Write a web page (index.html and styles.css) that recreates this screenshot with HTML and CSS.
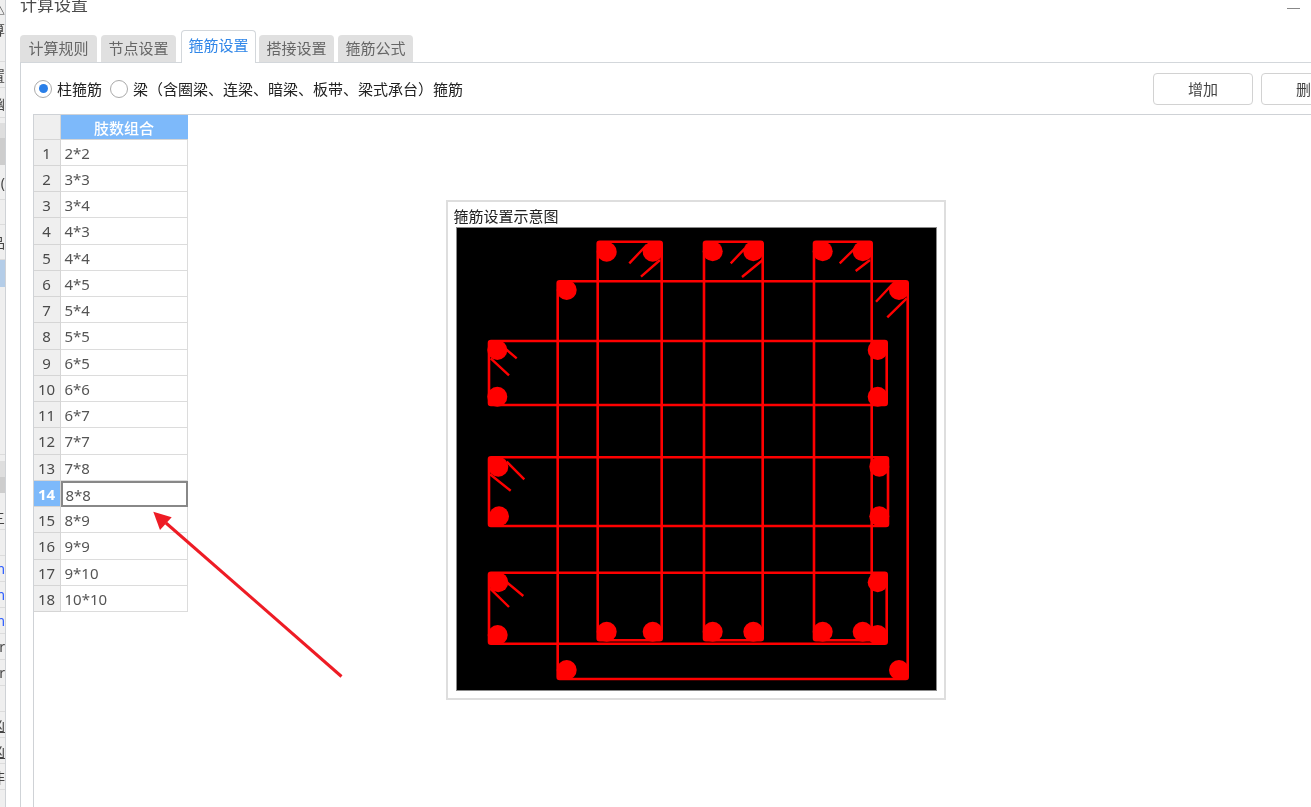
FILE: index.html
```html
<!DOCTYPE html>
<html lang="zh-CN">
<head>
<meta charset="utf-8">
<title>计算设置</title>
<link rel="stylesheet" href="styles.css">
</head>
<body>
<div class="page">
  <aside class="strip">
    <div class="sr h16"><span>△</span></div>
    <div class="sr h26"><span>算</span></div>
    <div class="sr h20 line"></div>
    <div class="sr h26 line"><span>置</span></div>
    <div class="sr h30 line"><span>幽</span></div>
    <div class="sr h5"></div>
    <div class="sr h15 gray"></div>
    <div class="sr h27 dark"></div>
    <div class="sr h35 line"><span>(</span></div>
    <div class="sr h25 line"></div>
    <div class="sr h35 line"><span>品</span></div>
    <div class="sr h27 sel"></div>
    <div class="sr h168 line"></div>
    <div class="sr h6"></div>
    <div class="sr h16 gray"></div>
    <div class="sr h16 dark"></div>
    <div class="sr h12"></div>
    <div class="sr h25 line"><span>三</span></div>
    <div class="sr h26 line"></div>
    <div class="sr h26 line blue"><span>m</span></div>
    <div class="sr h26 line blue"><span>m</span></div>
    <div class="sr h26 line blue"><span>m</span></div>
    <div class="sr h26 line"><span>r</span></div>
    <div class="sr h26 line"><span>r</span></div>
    <div class="sr h26 line"></div>
    <div class="sr h26 line"><span class="ul">凶</span></div>
    <div class="sr h26 line"><span class="ul">凶</span></div>
    <div class="sr h26 line"><span>非</span></div>
  </aside>

  <main class="dialog">
    <header class="titlebar">
      <h1 class="title">计算设置</h1>
      <span class="minimize"></span>
    </header>

    <nav class="tabs">
      <a class="tab first">计算规则</a>
      <a class="tab">节点设置</a>
      <a class="tab active">箍筋设置</a>
      <a class="tab">搭接设置</a>
      <a class="tab">箍筋公式</a>
    </nav>

    <section class="panel">
      <div class="toolbar">
        <div class="radios">
          <label class="radio"><i class="dot on"></i>柱箍筋</label>
          <label class="radio"><i class="dot"></i>梁（含圈梁、连梁、暗梁、板带、梁式承台）箍筋</label>
        </div>
        <div class="buttons">
          <button class="btn">增加</button>
          <button class="btn">删除</button>
        </div>
      </div>

      <div class="body">
        <div class="grid">
          <div class="corner"></div><div class="head">肢数组合</div>
          <div class="num">1</div><div class="cell">2*2</div>
          <div class="num">2</div><div class="cell">3*3</div>
          <div class="num">3</div><div class="cell">3*4</div>
          <div class="num">4</div><div class="cell">4*3</div>
          <div class="num">5</div><div class="cell">4*4</div>
          <div class="num">6</div><div class="cell">4*5</div>
          <div class="num">7</div><div class="cell">5*4</div>
          <div class="num">8</div><div class="cell">5*5</div>
          <div class="num">9</div><div class="cell">6*5</div>
          <div class="num">10</div><div class="cell">6*6</div>
          <div class="num">11</div><div class="cell">6*7</div>
          <div class="num">12</div><div class="cell">7*7</div>
          <div class="num">13</div><div class="cell">7*8</div>
          <div class="num cur">14</div><div class="cell cur">8*8</div>
          <div class="num">15</div><div class="cell">8*9</div>
          <div class="num">16</div><div class="cell">9*9</div>
          <div class="num">17</div><div class="cell">9*10</div>
          <div class="num">18</div><div class="cell">10*10</div>
        </div>

        <figure class="diagram">
          <figcaption class="caption">箍筋设置示意图</figcaption>
          <svg class="canvas" viewBox="456 227 481 464" width="481" height="464" aria-label="箍筋设置示意图">
            <g fill="none" stroke="#f00" stroke-width="2.6">
              <rect x="597.7" y="241.7" width="64" height="398.6" rx="2"/>
              <rect x="704" y="241.7" width="58.7" height="398.6" rx="2"/>
              <rect x="814" y="241.7" width="57.7" height="398.6" rx="2"/>
              <rect x="557.7" y="281.3" width="350" height="397.7" rx="2"/>
              <rect x="489" y="341" width="397.7" height="64" rx="2"/>
              <rect x="489" y="457.3" width="399" height="68.7" rx="2"/>
              <rect x="489" y="572.7" width="397.7" height="71" rx="2"/>
              <path stroke-width="2.4" d="M646.7 245L629.3 263.3M660 260L641 276.7M745 248.3L730.7 263.3M762.7 260L742 277M855 248.3L839.7 263.3M870 260L855.7 271M891.7 285L876 301.7M906.7 298.3L887.3 317.3M505.7 349L516.7 358.3M490.7 358.3L509 375.3M506.7 461.7L524.3 479.3M490 474.3L510.7 490.7M506.7 582.3L523.3 596M490 588.3L509 607"/>
            </g>
            <path fill="#f00" d="M597.7 241.7h9v10h-9zM652.7 241.7h9v10h-9zM704 241.7h9v10h-9zM753.3 241.7h9.4v10h-9.4zM814 241.7h9v10h-9zM862.7 241.7h9v10h-9zM597.7 631.7h9v8.5h-9zM652.7 631.7h9v8.5h-9zM704 631.7h9v8.5h-9zM753.3 631.7h9.4v8.5h-9.4zM814 631.7h9v8.5h-9zM862.7 631.7h9v8.5h-9zM557.7 281.3h9v9h-9zM899 281.3h8.7v9h-8.7zM557.7 670h9v9h-9zM899 670h8.7v9h-8.7zM489 341h8.3v9h-8.3zM489 396.7h8.3v8.3h-8.3zM877.7 341h9v9h-9zM877.7 396.7h9v8.3h-9zM489 457.3h9.3v9.4h-9.3zM489 516.3h10v9.7h-10zM879.3 457.3h8.7v9.4h-8.7zM879.3 516.3h8.7v9.7h-8.7zM489 572.7h9.3v9.6h-9.3zM489 635h8.7v8.7h-8.7zM877.7 572.7h9v9.6h-9zM877.7 635h9v8.7h-9z"/>
            <g fill="#f00">
              <circle cx="606.7" cy="251.7" r="10"/><circle cx="652.7" cy="251.7" r="10"/>
              <circle cx="712.7" cy="251.3" r="10"/><circle cx="753.3" cy="251.3" r="10"/>
              <circle cx="822.7" cy="251.3" r="10"/><circle cx="862.7" cy="251.3" r="10"/>
              <circle cx="566.7" cy="290" r="10"/><circle cx="899" cy="290" r="10"/>
              <circle cx="497.3" cy="350" r="10"/><circle cx="497.3" cy="396.7" r="10"/>
              <circle cx="877.7" cy="350" r="10"/><circle cx="877.7" cy="396.7" r="10"/>
              <circle cx="498.3" cy="466.7" r="10"/><circle cx="499" cy="516.3" r="10"/>
              <circle cx="879.3" cy="466.7" r="10"/><circle cx="879.3" cy="516.3" r="10"/>
              <circle cx="498.3" cy="582.3" r="10"/><circle cx="497.7" cy="635" r="10"/>
              <circle cx="877.7" cy="582.3" r="10"/><circle cx="877.7" cy="635" r="10"/>
              <circle cx="606.7" cy="631.7" r="10"/><circle cx="652.7" cy="631.7" r="10"/>
              <circle cx="712.7" cy="631.7" r="10"/><circle cx="753.3" cy="631.7" r="10"/>
              <circle cx="822.7" cy="631.7" r="10"/><circle cx="862.7" cy="631.7" r="10"/>
              <circle cx="566.7" cy="670" r="10"/><circle cx="899" cy="670" r="10"/>
            </g>
          </svg>
        </figure>
      </div>
    </section>
  </main>

  <svg class="arrow" viewBox="0 0 1311 807" width="1311" height="807" aria-hidden="true">
    <path d="M341.5 676.5L166 523" fill="none" stroke="#ee1c25" stroke-width="3"/>
    <path d="M153.3 511.7L171.7 517.3L160 530z" fill="#ee1c25"/>
  </svg>
</div>
</body>
</html>
```

FILE: styles.css
```css
* { box-sizing: border-box; }
html, body { margin: 0; height: 100%; overflow: hidden; background: #fff; }
body { font-family: "Noto Sans", "Noto Sans CJK SC", sans-serif; font-size: 15px; color: #444; }

/* the reference is a slightly soft, upscaled capture */
.page { position: relative; display: flex; width: 1311px; height: 807px; overflow: hidden; background: #fff; filter: blur(0.3px); }

/* clipped sidebar behind the dialog */
.strip { flex: 0 0 6px; height: 807px; overflow: hidden; background: #efefef; border-right: 1px solid #cfd2d6; display: flex; flex-direction: column; }
.sr { flex: none; display: flex; justify-content: flex-end; align-items: center; overflow: hidden; font-size: 14px; color: #444; white-space: nowrap; }
.sr span { flex: none; }
.sr .ul { text-decoration: underline; }
.line { border-bottom: 1px solid #dcdcdc; }
.gray { background: #dedede; }
.dark { background: #cdcdcd; }
.sel { background: #b4cde8; }
.blue { color: #2b5cff; }
.h5 { height: 5px; } .h6 { height: 6px; } .h12 { height: 12px; } .h15 { height: 15px; } .h16 { height: 16px; }
.h20 { height: 20px; } .h25 { height: 25px; } .h26 { height: 26px; } .h27 { height: 27px; } .h30 { height: 30px; }
.h35 { height: 35px; } .h168 { height: 168px; }

.dialog { flex: none; width: 1291px; margin-left: 14px; display: flex; flex-direction: column; min-height: 0; }

.titlebar { flex: 0 0 30px; display: flex; justify-content: space-between; padding: 0 11px 0 0; }
.title { margin: 0; font-size: 17px; font-weight: 400; line-height: 10px; color: #4a4a4a; }
.minimize { width: 13px; height: 1px; margin-top: 8px; background: #888; }

.tabs { flex: 0 0 32px; display: flex; align-items: flex-end; gap: 4px; position: relative; z-index: 1; }
.tab { flex: none; width: 75px; height: 27px; text-align: center; line-height: 26px; font-size: 15px; color: #666; background: #e0e0e0; border-radius: 4px 4px 0 0; }
.tab.first { width: 77px; }
.tab.active { height: 33px; margin-left: 1px; margin-right: -1px; line-height: 29px; margin-bottom: -1px; color: #2f86e8; background: #fff; border: 1px solid #d3d7db; border-bottom: 0; }

.panel { flex: 1; min-height: 0; border-top: 1px solid #d3d7db; border-left: 1.5px solid #cfd3d7; display: flex; flex-direction: column; }

.toolbar { flex: 0 0 51px; display: flex; justify-content: space-between; align-items: center; padding-left: 13px; margin-right: -50px; }
.radios { display: flex; gap: 8px; }
.radio { display: flex; align-items: center; gap: 5px; font-size: 15px; color: #222; }
.dot { width: 18px; height: 18px; border: 1px solid #aaa; border-radius: 50%; display: flex; align-items: center; justify-content: center; background: #fff; }
.dot.on::after { content: ""; width: 9px; height: 9px; border-radius: 50%; background: #2a7fe8; }
.buttons { display: flex; gap: 8px; }
.btn { width: 100px; height: 32px; padding: 0; font: inherit; font-size: 15px; color: #444; background: #fff; border: 1px solid #d2d2d2; border-radius: 4px; }

.body { flex: 1; min-height: 0; margin-left: 11.5px; border-top: 1px solid #cfd2d6; border-left: 1.5px solid #cfd2d6; display: flex; align-items: flex-start; }

.grid { flex: none; width: 154px; display: grid; grid-template-columns: 27px 127px; grid-template-rows: 24.5px; grid-auto-rows: 26.25px; }
.corner, .num { background: #efefef; border-right: 1px solid #d5d5d5; border-bottom: 1px solid #d5d5d5; }
.head { background: #7db9fa; color: #fff; text-align: center; line-height: 26px; font-weight: 500; border-bottom: 1px solid #d5d5d5; }
.num { text-align: center; line-height: 27px; font-size: 15px; color: #4a4a4a; }
.cell { padding-left: 4px; line-height: 27px; font-size: 15px; color: #555; background: #fff; border-right: 1px solid #dcdcdc; border-bottom: 1px solid #dcdcdc; }
.num.cur { background: #7db9fa; color: #fff; font-weight: 700; }
.cell.cur { border: 2px solid #888; padding-left: 3px; line-height: 25px; }

.diagram { flex: none; width: 500px; height: 500px; margin: 85px 0 0 258px; padding: 0 0 0 8px; border: 2px solid #dedede; background: #fff; }
.caption { height: 25px; margin-left: -2px; padding-top: 4px; line-height: 20px; font-size: 15px; color: #222; }
.canvas { display: block; background: #000; outline: 1px solid #8a8a8a; outline-offset: -1px; }

.arrow { position: absolute; left: 0; top: 0; pointer-events: none; }
```
